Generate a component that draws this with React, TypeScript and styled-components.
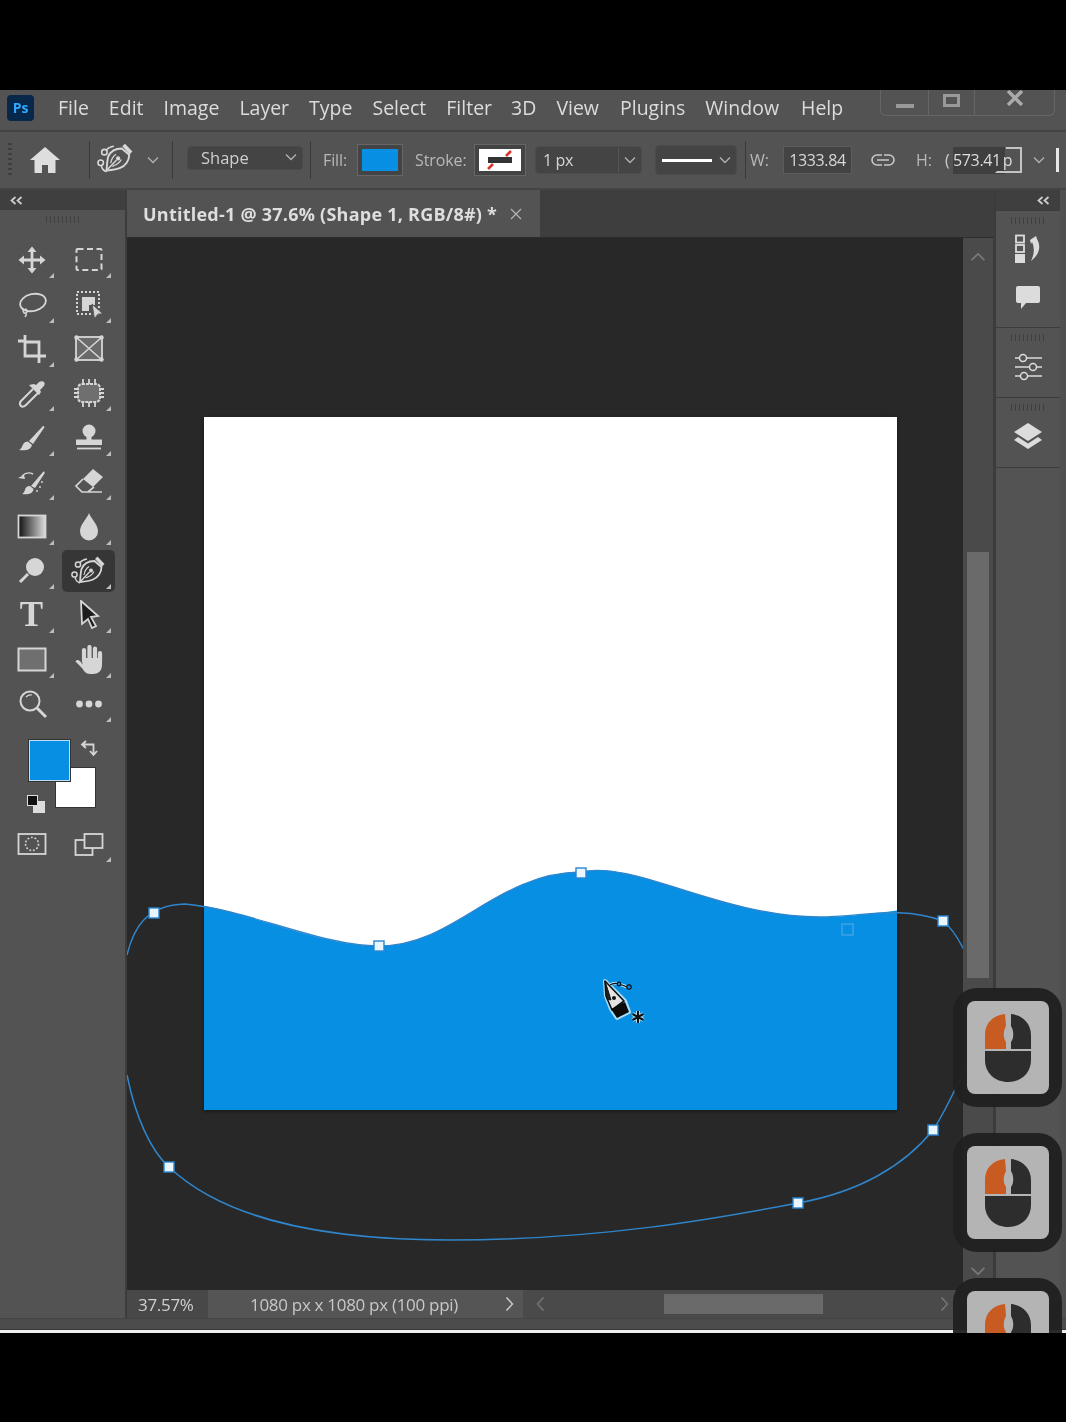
import React from "react";
import styled, { createGlobalStyle, css } from "styled-components";

const Global = createGlobalStyle`
  html, body { margin: 0; padding: 0; background: #000; }
  * { box-sizing: border-box; }
`;

const ml = css<{ $ml?: number }>`
  margin-left: ${(p) => p.$ml ?? 0}px;
`;

const BLUE = "#068fe3";

const Page = styled.div`
  width: 1066px;
  height: 1422px;
  background: #000;
  padding-top: 90px;
  overflow: hidden;
  font-family: "Open Sans", "Noto Sans", sans-serif;
`;
const Window = styled.div`
  position: relative;
  width: 1066px;
  height: 1243px;
  overflow: hidden;
  background: #535353;
  filter: blur(0.45px);
  display: flex;
  flex-direction: column;
`;

const MenuBar = styled.div`
  height: 42px;
  flex: none;
  display: flex;
  align-items: center;
  padding: 0 11px 5px 7px;
  background: #535353;
  border-bottom: 2px solid #444;
`;
const Logo = styled.div`
  width: 27px;
  height: 26px;
  margin-right: 24px;
  border-radius: 4px;
  background: #07284a;
  color: #31a8ff;
  font: 700 14px/26px "Open Sans", sans-serif;
  text-align: center;
`;
const MenuItem = styled.span`
  ${ml}
  font-size: 19.5px;
  letter-spacing: 0;
  color: #dcdcdc;
  line-height: 26px;
`;
const Controls = styled.div`
  margin-left: auto;
  align-self: flex-start;
  width: 175px;
  height: 26px;
  display: grid;
  grid-template-columns: 47px 46px 1fr;
  border: 1px solid #666;
  border-top: 0;
  border-radius: 0 0 6px 6px;
`;
const Control = styled.div`
  display: flex;
  justify-content: center;
  align-items: center;
  border-left: 1px solid #666;
  &:first-child { border-left: 0; padding-top: 6px; }
`;
const Minimize = styled.div`
  width: 18px;
  height: 4px;
  background: #999;
`;
const Maximize = styled.div`
  width: 17px;
  height: 13px;
  margin-top: -4px;
  border: 3px solid #999;
`;

const OptionsBar = styled.div`
  height: 58px;
  flex: none;
  display: flex;
  align-items: center;
  padding-left: 8px;
  background: #535353;
  border-bottom: 2px solid #444;
`;
const Grip = styled.div`
  width: 4px;
  height: 34px;
  background: repeating-linear-gradient(to bottom, #3e3e3e 0 2px, transparent 2px 5px);
`;
const Slot = styled.div<{ $w: number; $ml?: number }>`
  ${ml}
  width: ${(p) => p.$w}px;
  flex: none;
  display: flex;
  justify-content: center;
  align-items: center;
  color: #d8d8d8;
`;
const PenSlot = styled(Slot)`
  margin-bottom: 3px;
`;
const Sep = styled.div<{ $ml?: number }>`
  ${ml}
  width: 1px;
  height: 38px;
  flex: none;
  background: #3a3a3a;
`;
const Dropdown = styled.div<{ $w: number; $ml?: number }>`
  ${ml}
  width: ${(p) => p.$w}px;
  height: 24px;
  margin-bottom: 4px;
  flex: none;
  display: flex;
  align-items: center;
  justify-content: space-between;
  padding: 0 4px 2px 13px;
  border: 1px solid #4a4a4a;
  border-radius: 4px;
  background: #444;
  color: #cfcfcf;
  font-size: 16.5px;
`;
const Label = styled.span<{ $w: number; $ml?: number }>`
  ${ml}
  width: ${(p) => p.$w}px;
  flex: none;
  color: #b8b8b8;
  font-size: 16px;
  letter-spacing: -0.1px;
  font-weight: 500;
`;
const Swatch = styled.div<{ $w: number; $ml?: number }>`
  ${ml}
  width: ${(p) => p.$w}px;
  height: 32px;
  flex: none;
  padding: 4px;
  display: flex;
  border: 1px solid #666;
  background: #444;
`;
const SwatchFill = styled.div<{ $c: string }>`
  flex: 1;
  display: flex;
  background: ${(p) => p.$c};
`;
const Combo = styled.div<{ $w: number; $ml?: number }>`
  ${ml}
  width: ${(p) => p.$w}px;
  height: 28px;
  flex: none;
  display: grid;
  grid-template-columns: 1fr 23px;
  align-items: center;
  border: 1px solid #4c4c4c;
  border-radius: 4px;
  background: #444;
  color: #d4d4d4;
  font-size: 16px;
  letter-spacing: -0.4px;
  padding-left: 7px;
`;
const ComboArrow = styled.div`
  height: 100%;
  display: flex;
  align-items: center;
  justify-content: center;
  border-left: 1px solid #555;
`;
const LineDrop = styled.div<{ $w: number; $ml?: number }>`
  ${ml}
  width: ${(p) => p.$w}px;
  height: 30px;
  flex: none;
  display: flex;
  align-items: center;
  justify-content: space-between;
  padding: 0 4px 0 6px;
  border: 1px solid #4c4c4c;
  border-radius: 4px;
  background: #444;
`;
const LineSample = styled.div`
  width: 50px;
  height: 3px;
  background: #fff;
`;
const ValueInput = styled.div`
  width: 69px;
  height: 28px;
  flex: none;
  display: flex;
  align-items: center;
  justify-content: center;
  border: 1px solid #5c5c5c;
  background: #434343;
  color: #d8d8d8;
  font-size: 16px;
  letter-spacing: -0.4px;
`;
const Paren = styled.span`
  width: 8px;
  flex: none;
  color: #ccc;
  font-size: 16px;
`;
const HField = styled.div`
  width: 60px;
  height: 27px;
  flex: none;
  display: flex;
  align-items: center;
  background: linear-gradient(to right, #3f3f3f 0 52px, transparent 52px);
  color: #dcdcdc;
  font-size: 16px;
  letter-spacing: -0.35px;
  word-spacing: -2px;
  white-space: nowrap;
`;
const Bracket = styled.div`
  width: 27px;
  height: 26px;
  margin-left: -18px;
  flex: none;
  position: relative;
  border: 2px solid #c4c4c4;
  border-left-color: transparent;
  border-bottom-color: #c4c4c4;
  clip-path: polygon(40% 0, 100% 0, 100% 100%, 0 100%, 0 75%, 40% 75%);
`;
const WhiteBar = styled.div`
  width: 3px;
  height: 24px;
  flex: none;
  background: #e8e8e8;
`;

const Body = styled.div`
  flex: none;
  height: 1128px;
  display: grid;
  grid-template-columns: 125px 2px 866px 3px 64px 1fr;
`;
const Rule = styled.div`
  background: #3c3c3c;
`;
const LeftColumn = styled.div`
  display: flex;
  flex-direction: column;
  background: #535353;
`;
const CollapseBar = styled.div<{ $end?: boolean }>`
  height: 20px;
  flex: none;
  display: flex;
  align-items: center;
  justify-content: ${(p) => (p.$end ? "flex-end" : "flex-start")};
  padding: 0 10px;
  background: #3f3f3f;
  color: #cfcfcf;
`;
const GripRow = styled.div<{ $h: number }>`
  height: ${(p) => p.$h}px;
  flex: none;
  display: flex;
  justify-content: center;
  padding-top: 6px;
  &::before {
    content: "";
    width: 34px;
    height: 7px;
    background: repeating-linear-gradient(to right, #3f3f3f 0 1.5px, transparent 1.5px 4px);
  }
`;
const ToolGrid = styled.div`
  display: grid;
  grid-template-columns: repeat(2, 57px);
  grid-auto-rows: 44.4px;
  padding-left: 3px;
  justify-items: center;
  align-items: center;
`;
const Tool = styled.div<{ $active?: boolean; $fly?: boolean }>`
  position: relative;
  width: 53px;
  height: 42px;
  display: flex;
  justify-content: center;
  align-items: center;
  border-radius: 5px;
  color: #d6d6d6;
  background: ${(p) => (p.$active ? "#363636" : "transparent")};
  &::after {
    content: "";
    display: ${(p) => (p.$fly ? "block" : "none")};
    position: absolute;
    right: 4px;
    bottom: 3px;
    border-left: 5px solid transparent;
    border-bottom: 5px solid #bdbdbd;
  }
`;
const TypeGlyph = styled.span`
  font-family: "Liberation Serif", serif;
  font-weight: 700;
  font-size: 35px;
  line-height: 42px;
  color: #d6d6d6;
`;
const ColorBlock = styled.div`
  position: relative;
  height: 91px;
  flex: none;
  margin-top: 5px;
`;
const FgSwatch = styled.div`
  position: absolute;
  left: 29px;
  top: 9px;
  width: 41px;
  height: 41px;
  z-index: 1;
  background: ${BLUE};
  border: 1px solid #bfe0f4;
  outline: 1px solid #333;
`;
const BgSwatch = styled.div`
  position: absolute;
  left: 55px;
  top: 36px;
  width: 41px;
  height: 41px;
  background: #fff;
  border: 1px solid #333;
`;
const MiniIcon = styled.div<{ $x: number; $y: number }>`
  position: absolute;
  left: ${(p) => p.$x}px;
  top: ${(p) => p.$y}px;
  color: #d6d6d6;
  display: flex;
`;
const DefaultBack = styled.div`
  position: absolute;
  left: 33px;
  top: 70px;
  width: 12px;
  height: 12px;
  background: #ddd;
`;
const DefaultFront = styled.div`
  position: absolute;
  left: 27px;
  top: 64px;
  width: 11px;
  height: 11px;
  background: #111;
  border: 1px solid #ddd;
`;

const Center = styled.div`
  display: flex;
  flex-direction: column;
  min-width: 0;
`;
const TabRow = styled.div`
  height: 48px;
  flex: none;
  display: flex;
  background: #3e3e3e;
  border-bottom: 1px solid #2c2c2c;
`;
const Tab = styled.div`
  width: 413px;
  display: flex;
  align-items: center;
  gap: 13px;
  padding: 0 0 0 16px;
  background: #535353;
`;
const TabTitle = styled.span`
  font-size: 18px;
  font-weight: 700;
  letter-spacing: 0.24px;
  color: #dedede;
  white-space: nowrap;
`;
const Workspace = styled.div`
  flex: 1;
  display: grid;
  grid-template-columns: 836px 30px;
  min-height: 0;
`;
const CanvasSvg = styled.svg`
  display: block;
  width: 836px;
  height: 1052px;
  background: #282828;
`;
const VScroll = styled.div`
  display: flex;
  flex-direction: column;
  align-items: center;
  background: #4a4a4a;
  color: #777;
`;
const VEnd = styled.div`
  height: 38px;
  flex: none;
  display: flex;
  align-items: center;
  justify-content: center;
`;
const VTrack = styled.div`
  flex: 1;
  width: 100%;
  padding: 276px 0 274px 0;
  display: flex;
  justify-content: center;
`;
const VThumb = styled.div`
  width: 22px;
  background: #6a6a6a;
`;
const StatusBar = styled.div`
  height: 28px;
  flex: none;
  display: grid;
  grid-template-columns: 81px 315px 1fr;
  background: #4a4a4a;
  color: #d0d0d0;
  font-size: 17px;
  letter-spacing: -0.3px;
`;
const Zoom = styled.div`
  display: flex;
  align-items: center;
  padding-left: 11px;
  background: #484848;
`;
const DocInfo = styled.div`
  display: flex;
  align-items: center;
  justify-content: space-between;
  padding: 0 9px 0 42px;
  background: #555;
  color: #c8c8c8;
`;
const HScroll = styled.div`
  display: flex;
  align-items: center;
  padding: 0 44px 0 13px;
  color: #777;
`;
const HThumb = styled.div`
  width: 159px;
  height: 20px;
  margin: 0 auto 0 119px;
  background: #6a6a6a;
`;

const Dock = styled.div`
  display: flex;
  flex-direction: column;
  background: #3c3c3c;
  gap: 1px;
`;
const DockPanel = styled.div<{ $h?: number }>`
  ${(p) => (p.$h ? `height: ${p.$h}px; flex: none;` : "flex: 1;")}
  display: flex;
  flex-direction: column;
  align-items: center;
  background: #535353;
  color: #dcdcdc;
`;
const DockIcon = styled.div<{ $mt: number }>`
  margin-top: ${(p) => p.$mt}px;
  display: flex;
`;
const Edge = styled.div`
  background: #505050;
`;
const BottomBand = styled.div`
  height: 12px;
  flex: none;
  background: linear-gradient(to bottom, #4c4c4c 0 10px, #3b3838 10px);
  border-top: 1px solid #444;
`;
const WhiteLine = styled.div`
  height: 3px;
  flex: none;
  background: #eef0f0;
`;

const MouseStack = styled.div`
  position: absolute;
  left: 953px;
  top: 898px;
  display: flex;
  flex-direction: column;
  gap: 26px;
`;
const MouseBadge = styled.div`
  width: 109px;
  height: 119px;
  flex: none;
  padding: 13px 13px 13px 14px;
  border-radius: 24px;
  background: rgba(32, 32, 32, 0.95);
`;
const MouseFace = styled.div`
  width: 82px;
  height: 93px;
  display: flex;
  justify-content: center;
  align-items: center;
  border-radius: 8px;
  background: #b4b4b4;
`;

type S = { s?: number; children?: React.ReactNode };
const Svg = ({ s = 30, children }: S) => (
  <svg width={s} height={s} viewBox="0 0 30 30" fill="none" stroke="currentColor" strokeWidth={1.6}>
    {children}
  </svg>
);

const Chevron = ({ up, s = 14, color = "#b0b0b0" }: { up?: boolean; s?: number; color?: string }) => (
  <svg width={s} height={s} viewBox="0 0 14 14" fill="none" stroke={color} strokeWidth={1.4}>
    <path d={up ? "M2 9.5 7 4.5l5 5" : "M2 4.5l5 5 5-5"} />
  </svg>
);
const Side = ({ right, color = "#777" }: { right?: boolean; color?: string }) => (
  <svg width={9} height={16} viewBox="0 0 9 16" fill="none" stroke={color} strokeWidth={1.4}>
    <path d={right ? "M1.5 1.5 7.5 8l-6 6.5" : "M7.5 1.5 1.5 8l6 6.5"} />
  </svg>
);
const Collapse = () => (
  <svg width={13} height={9} viewBox="0 0 13 9" fill="none" stroke="currentColor" strokeWidth={1.7}>
    <path d="M5.5 1 1.5 4.5l4 3.5M11.5 1l-4 3.5 4 3.5" />
  </svg>
);

const PenNib = ({ s = 36 }: { s?: number }) => (
  <svg width={s} height={s} viewBox="0 0 36 36" fill="none" stroke="currentColor" strokeWidth={1.8}>
    <path d="M26.500 3.500 33.500 11 31 13.500 24 6Z" fill="currentColor" stroke="none" />
    <path d="M23.500 8c-6 0-11 3-13 8-.8 3-1 7-1.500 13 6-.5 10-1 13-2.500 5-2 8.500-7 8.500-12.500Z" />
    <path d="M9 29 18.500 19" strokeWidth={1.4} />
    <circle cx="20" cy="17.500" r="2" fill="currentColor" stroke="none" />
    <path d="M14.500 25c3-1 7-3.500 8.500-6.500M13 22c.5-3 2-6.500 5-8.500" strokeWidth={1.2} />
    <circle cx="7" cy="11.500" r="2.600" strokeWidth={1.5} />
    <circle cx="3.500" cy="21.500" r="2.600" strokeWidth={1.5} />
    <path d="M9 9.500c1.500-2 4-3 7-3.500M4 24c.5 3 2 5 5 6" strokeWidth={1.5} />
  </svg>
);

const tools: { key: string; fly?: boolean; active?: boolean; icon: React.ReactNode }[] = [
  { key: "move", fly: true, icon: <Svg><path d="M15 4v22M4 15h22" strokeWidth={2.8} /><path d="M15 1.500 10.500 7h9ZM15 28.500 10.500 23h9ZM1.500 15 7 10.500v9ZM28.500 15 23 10.500v9Z" fill="currentColor" stroke="none" /></Svg> },
  { key: "marquee", fly: true, icon: <Svg><rect x="2.500" y="4" width="25" height="21" rx="1" strokeDasharray="6 3.500" strokeWidth={2} /></Svg> },
  { key: "lasso", fly: true, icon: <Svg><ellipse cx="16" cy="12.500" rx="13" ry="8.500" transform="rotate(-12 16 12.500)" strokeWidth={1.8} /><path d="M7 19c-2 2 0 5 2 4s1-4-1-4M9 23c1 2 0 3-1 4" strokeWidth={1.6} /></Svg> },
  { key: "objsel", fly: true, icon: <Svg><rect x="3" y="2" width="22" height="22" strokeDasharray="2 2" strokeWidth={2} /><path d="M8 7h13v8h-6v6H8Z" fill="currentColor" stroke="none" /><path d="M18 14 29 24h-5l-3.500 5Z" fill="#d6d6d6" stroke="#535353" strokeWidth={1} /></Svg> },
  { key: "crop", fly: true, icon: <Svg><path d="M1 7h6M8 1v21h21M8 8h14v21" strokeWidth={2.8} /></Svg> },
  { key: "frame", icon: <Svg><rect x="2" y="3" width="26" height="23" fill="#6a6a6a" strokeWidth={1.8} /><path d="M2 3l26 23M28 3 2 26" /><g fill="currentColor" stroke="none"><circle cx="2.500" cy="3.500" r="2.200" /><circle cx="27.500" cy="3.500" r="2.200" /><circle cx="2.500" cy="25.500" r="2.200" /><circle cx="27.500" cy="25.500" r="2.200" /></g></Svg> },
  { key: "dropper", fly: true, icon: <Svg><path d="M16 11 4 23c-2 2-1 4 0 5s3 1 5-1l12-12" strokeWidth={2} /><path d="M12 7l10 10 2-3-1-2 3-3c2-2 2-4 1-5s-3-1-5 0l-3 3-2-1Z" fill="currentColor" stroke="none" /></Svg> },
  { key: "patch", fly: true, icon: <Svg><rect x="4" y="6" width="22" height="18" rx="4" fill="#6f6f6f" strokeWidth={2} strokeDasharray="3 1" /><path d="M9 1v5M15 1v5M21 1v5M9 24v5M15 24v5M21 24v5M0 11h4M0 15h4M0 19h4M26 11h4M26 15h4M26 19h4" strokeWidth={1.8} /></Svg> },
  { key: "brush", fly: true, icon: <Svg><path d="M12 18 26 3c1.500-.5 1.500 1 1 2L16 21Z" fill="currentColor" stroke="none" /><path d="M11 18.500c-4 0-5 3-6 5-.5 2-2 3-3 3.500 6 1 12 0 13-5Z" fill="currentColor" stroke="none" /></Svg> },
  { key: "stamp", fly: true, icon: <Svg><circle cx="15" cy="8" r="6.500" fill="currentColor" stroke="none" /><path d="M12.500 12h5v5h-5ZM2 16.500h26V22H2Z" fill="currentColor" stroke="none" /><path d="M3 25.500h24" strokeWidth={1.8} /></Svg> },
  { key: "history", fly: true, icon: <Svg><path d="M14 19 26 5c1-1 2 0 1.500 1.500L18 21Z" fill="currentColor" stroke="none" /><path d="M13 19c-3 0-5 2-5 4-.5 1.500-1.500 3-3 4 5 1 11 0 11.500-5Z" fill="currentColor" stroke="none" /><path d="M16 7c-4-2-8-1-11 2" strokeWidth={1.4} /><path d="M1 11l6-3 1 4Z" fill="currentColor" stroke="none" /><path d="M25 14v2M23 19v2M20 23v2" strokeWidth={1.4} /></Svg> },
  { key: "eraser", fly: true, icon: <Svg><path d="M19 2 29 10 19 20 9 12Z" fill="currentColor" stroke="none" /><path d="M9 12 2 19l6 6h6l6-5M9 25h19" strokeWidth={1.7} /></Svg> },
  { key: "gradient", fly: true, icon: <Svg><defs><linearGradient id="grad"><stop offset="0" stopColor="#111" /><stop offset="1" stopColor="#ddd" /></linearGradient></defs><rect x="1.500" y="3.500" width="27" height="22" fill="url(#grad)" stroke="#d6d6d6" strokeWidth={1.8} /></Svg> },
  { key: "drop", fly: true, icon: <Svg><path d="M15 1c2 6 9 11 9 18.500a9 9 0 0 1-18 0C6 12 13 7 15 1Z" fill="currentColor" stroke="none" /></Svg> },
  { key: "dodge", fly: true, icon: <Svg><circle cx="18" cy="11" r="9" fill="currentColor" stroke="none" /><path d="M11 18 3 26" strokeWidth={3} /></Svg> },
  { key: "pen", fly: true, active: true, icon: <PenNib /> },
  { key: "type", fly: true, icon: <TypeGlyph>T</TypeGlyph> },
  { key: "path", fly: true, icon: <Svg><path d="M7 1 24 16l-7 1 5 9-4 2-4-9-6 5Z" fill="#1d1d1d" stroke="#d6d6d6" strokeWidth={1.8} /></Svg> },
  { key: "rect", fly: true, icon: <Svg><rect x="1.500" y="3.500" width="27" height="22" fill="#6f6f6f" strokeWidth={2} /></Svg> },
  { key: "hand", fly: true, icon: <Svg><path d="M10 16V5M15.500 15V2M21 15V3.500M26 17V8" stroke="currentColor" strokeWidth={4.200} strokeLinecap="round" /><path d="M8 13h20v7c0 6-4 9-9 9h-3c-4 0-6-3-8-6L1.500 16.500c1-2 3-2 5 0l2 3Z" fill="currentColor" stroke="none" /></Svg> },
  { key: "zoom", icon: <Svg><circle cx="13" cy="12" r="9.500" strokeWidth={2} /><path d="M20 19l9 9" strokeWidth={3} /><path d="M9 8c2-2 4-2.500 6-2" strokeWidth={1.2} /></Svg> },
  { key: "more", fly: true, icon: <Svg><g fill="currentColor" stroke="none"><circle cx="5.500" cy="15" r="3.400" /><circle cx="15" cy="15" r="3.400" /><circle cx="24.500" cy="15" r="3.400" /></g></Svg> },
];

const Mouse = () => (
  <svg width="48" height="70" viewBox="0 0 48 70">
    <path d="M21 1C9 2 1 10 1 22v14h21V29c-3-4-3-11 0-16Z" fill="#c75b22" />
    <path d="M27 1c11 1 20 9 20 21v14H27v-7c3-4 3-11 0-16Z" fill="#2d2d2d" />
    <path d="M1 38h46v9c0 13-10 22-23 22S1 60 1 47Z" fill="#2d2d2d" />
  </svg>
);

const menu: [string, number][] = [
  ["File", 0], ["Edit", 20], ["Image", 20], ["Layer", 20], ["Type", 20], ["Select", 20],
  ["Filter", 20], ["3D", 19], ["View", 20], ["Plugins", 21], ["Window", 20], ["Help", 22],
];

const anchors: [number, number][] = [
  [154, 913], [379, 946], [581, 873], [943, 921], [933, 1130], [798, 1203], [169, 1167],
];

const WAVE =
  "M190 903C260 915 320 946 379 946C455 946 495 873 581 872C635 860 720 917 820 917C850 917 880 912 910 909V1120H190Z";

export default function App() {
  return (
    <Page>
      <Global />
      <Window>
        <MenuBar>
          <Logo>Ps</Logo>
          {menu.map(([m, g]) => (
            <MenuItem key={m} $ml={g}>{m}</MenuItem>
          ))}
          <Controls>
            <Control><Minimize /></Control>
            <Control><Maximize /></Control>
            <Control>
              <svg width="18" height="16" viewBox="0 0 18 16" style={{ marginTop: -10 }} stroke="#aaa" strokeWidth={3.4}>
                <path d="M2 1l14 14M16 1 2 15" />
              </svg>
            </Control>
          </Controls>
        </MenuBar>

        <OptionsBar>
          <Grip />
          <Slot $w={66}>
            <svg width="30" height="26" viewBox="0 0 30 26" fill="#dedede">
              <path d="M15 0 0 13h4.500v13h7.500v-8h6v8h7.500V13H30Z" />
            </svg>
          </Slot>
          <Sep $ml={11} />
          <PenSlot $w={52}><PenNib s={38} /></PenSlot>
          <Slot $w={22}><Chevron /></Slot>
          <Sep $ml={8} />
          <Dropdown $w={116} $ml={14}>Shape<Chevron /></Dropdown>
          <Sep $ml={7} />
          <Label $w={34} $ml={12}>Fill:</Label>
          <Swatch $w={46}><SwatchFill $c={BLUE} /></Swatch>
          <Label $w={59} $ml={12}>Stroke:</Label>
          <Swatch $w={52}>
            <SwatchFill $c="#fff">
              <svg width="42" height="22" viewBox="0 0 42 22">
                <rect x="9" y="8" width="24" height="6" fill="#333" />
                <path d="M27 7 32 2M9 20l5-5" stroke="#d8342b" strokeWidth={2.6} />
              </svg>
            </SwatchFill>
          </Swatch>
          <Combo $w={107} $ml={9}>
            1 px
            <ComboArrow><Chevron /></ComboArrow>
          </Combo>
          <LineDrop $w={82} $ml={13}><LineSample /><Chevron /></LineDrop>
          <Sep $ml={8} />
          <Label $w={33} $ml={4}>W:</Label>
          <ValueInput>1333.84</ValueInput>
          <Slot $w={62}>
            <svg width="26" height="14" viewBox="0 0 26 14" fill="none" stroke="#c8c8c8" strokeWidth={1.6}>
              <path d="M12 2H7a5 5 0 0 0 0 10h5M14 2h5a5 5 0 0 1 0 10h-5M7 7h12" />
            </svg>
          </Slot>
          <Label $w={29} $ml={2}>H:</Label>
          <Paren>(</Paren>
          <HField>573.41 p</HField>
          <Bracket />
          <Slot $w={34}><Chevron /></Slot>
          <WhiteBar />
        </OptionsBar>

        <Body>
          <LeftColumn>
            <CollapseBar><Collapse /></CollapseBar>
            <GripRow $h={28} />
            <ToolGrid>
              {tools.map((t) => (
                <Tool key={t.key} $active={t.active} $fly={t.fly}>{t.icon}</Tool>
              ))}
            </ToolGrid>
            <ColorBlock>
              <FgSwatch />
              <BgSwatch />
              <MiniIcon $x={80} $y={8}>
                <svg width="20" height="20" viewBox="0 0 20 20" fill="none" stroke="currentColor" strokeWidth={1.8}>
                  <path d="M6 2 2 5.500 6 9M2 5.500h11.500V15M10 12l3.500 4 3.500-4" />
                </svg>
              </MiniIcon>
              <DefaultBack />
              <DefaultFront />
            </ColorBlock>
            <ToolGrid>
              <Tool>
                <Svg>
                  <rect x="1.500" y="5" width="27" height="20" strokeWidth={1.8} />
                  <circle cx="15" cy="15" r="6.500" strokeDasharray="1.800 1.800" strokeWidth={1.6} />
                </Svg>
              </Tool>
              <Tool $fly>
                <Svg>
                  <rect x="1.500" y="11" width="17" height="15" strokeWidth={1.8} />
                  <rect x="10.500" y="5" width="18" height="14" fill="#535353" strokeWidth={1.8} />
                </Svg>
              </Tool>
            </ToolGrid>
          </LeftColumn>
          <Rule />
          <Center>
            <TabRow>
              <Tab>
                <TabTitle>Untitled-1 @ 37.6% (Shape 1, RGB/8#) *</TabTitle>
                <svg width="12" height="12" viewBox="0 0 12 12" stroke="#b5b5b5" strokeWidth={1.2}>
                  <path d="M1 1l10 10M11 1 1 11" />
                </svg>
              </Tab>
            </TabRow>
            <Workspace>
              <CanvasSvg viewBox="127 238 836 1052">
                <defs>
                  <clipPath id="doc"><rect x="204" y="417" width="693" height="693" /></clipPath>
                  <filter id="sh" x="-5%" y="-5%" width="110%" height="110%">
                    <feDropShadow dx="0" dy="1" stdDeviation="2" floodColor="#000" floodOpacity="0.5" />
                  </filter>
                </defs>
                <rect x="204" y="417" width="693" height="693" fill="#fff" filter="url(#sh)" />
                <path clipPath="url(#doc)" d={WAVE} fill={BLUE} />
                <path
                  d="M127 955C133 930 145 905 185 904C250 910 320 946 379 946C455 946 495 873 581 872C635 860 720 917 820 917C860 917 900 905 943 921C952 928 958 938 964 950"
                  fill="none"
                  stroke="#2f86cc"
                  strokeWidth={1.4}
                />
                <path
                  d="M127 1075C135 1115 150 1150 169 1167C230 1225 340 1240 450 1240C600 1240 720 1218 798 1203C860 1192 905 1165 933 1130C945 1112 955 1090 964 1070"
                  fill="none"
                  stroke="#2f86cc"
                  strokeWidth={1.5}
                />
                {anchors.map(([x, y]) => (
                  <rect key={x} x={x - 5} y={y - 5} width={10} height={10} fill="#eaf6fd" stroke="#2a86d0" strokeWidth={1.4} />
                ))}
                <rect x="842" y="924" width="11" height="11" fill="none" stroke="#4da6e8" strokeWidth={1.2} />
                <g strokeLinejoin="round" fill="none">
                  <path d="M605 981 625 1001 629 1012 617 1018 611 1009 606 996Z" stroke="#a8dcf7" strokeWidth={4} />
                  <path d="M605 981 624 1001 612 1010 606 996Z" fill="#e4e4e4" stroke="#111" strokeWidth={1.6} />
                  <path d="M605 981 611 1000 607 999Z" fill="#222" stroke="#111" strokeWidth={1} />
                  <path d="M611 1009 625 1002 629 1012 617 1018Z" fill="#0b0b0b" />
                  <circle cx="614" cy="998" r="2" fill="#111" />
                  <path d="M610 985c3-2 6-2 9-1s6 2 8 3" stroke="#a8dcf7" strokeWidth={3} />
                  <path d="M610 985c3-2 6-2 9-1s6 2 8 3" stroke="#111" strokeWidth={1.2} />
                  <circle cx="619" cy="984" r="1.800" fill={BLUE} stroke="#111" strokeWidth={1.2} />
                  <circle cx="629" cy="987" r="2.200" fill={BLUE} stroke="#111" strokeWidth={1.2} />
                  <path d="M638 1011v12M632.500 1014l11 6M643.500 1014l-11 6" stroke="#a8dcf7" strokeWidth={4} />
                  <path d="M638 1011v12M632.500 1014l11 6M643.500 1014l-11 6" stroke="#111" strokeWidth={2} />
                </g>
              </CanvasSvg>
              <VScroll>
                <VEnd><Chevron up s={18} color="#777" /></VEnd>
                <VTrack><VThumb /></VTrack>
                <VEnd><Chevron s={18} color="#777" /></VEnd>
              </VScroll>
            </Workspace>
            <StatusBar>
              <Zoom>37.57%</Zoom>
              <DocInfo>
                1080 px x 1080 px (100 ppi)
                <Side right color="#cfcfcf" />
              </DocInfo>
              <HScroll>
                <Side />
                <HThumb />
                <Side right />
              </HScroll>
            </StatusBar>
          </Center>
          <Rule />
          <Dock>
            <CollapseBar $end><Collapse /></CollapseBar>
            <DockPanel $h={116}>
              <GripRow $h={17} />
              <DockIcon $mt={6}>
                <svg width="30" height="30" viewBox="0 0 30 30" fill="none" stroke="currentColor" strokeWidth={1.8}>
                  <rect x="3" y="1.500" width="8" height="7" />
                  <rect x="3" y="11" width="8" height="7" />
                  <rect x="2" y="20" width="10" height="9" fill="currentColor" stroke="none" />
                  <path d="M17 6l6-4 1 3c4 7 3 15-6 22 3-6 4-13 1-19l-1 2Z" fill="currentColor" stroke="none" />
                </svg>
              </DockIcon>
              <DockIcon $mt={20}>
                <svg width="26" height="26" viewBox="0 0 26 26" fill="currentColor">
                  <path d="M3 2h20a2 2 0 0 1 2 2v13a2 2 0 0 1-2 2H11l-5 6v-6H3a2 2 0 0 1-2-2V4a2 2 0 0 1 2-2Z" />
                </svg>
              </DockIcon>
            </DockPanel>
            <DockPanel $h={69}>
              <GripRow $h={17} />
              <DockIcon $mt={8}>
                <svg width="30" height="28" viewBox="0 0 30 28" fill="none" stroke="currentColor" strokeWidth={1.5}>
                  <path d="M2 5h27M2 14h27M2 23h27" />
                  <circle cx="10" cy="5" r="3.500" fill="#535353" />
                  <circle cx="20" cy="14" r="3.500" fill="#535353" />
                  <circle cx="11" cy="23" r="3.500" fill="#535353" />
                </svg>
              </DockIcon>
            </DockPanel>
            <DockPanel $h={69}>
              <GripRow $h={17} />
              <DockIcon $mt={6}>
                <svg width="30" height="30" viewBox="0 0 30 30" fill="currentColor">
                  <path d="M15 2 29 11 15 20 1 11Z" />
                  <path d="M5 16 1 19l14 9 14-9-4-3-10 6.500Z" />
                </svg>
              </DockIcon>
            </DockPanel>
            <DockPanel />
          </Dock>
          <Edge />
        </Body>
        <BottomBand />
        <WhiteLine />

        <MouseStack>
          {[0, 1, 2].map((i) => (
            <MouseBadge key={i}>
              <MouseFace><Mouse /></MouseFace>
            </MouseBadge>
          ))}
        </MouseStack>
      </Window>
    </Page>
  );
}
